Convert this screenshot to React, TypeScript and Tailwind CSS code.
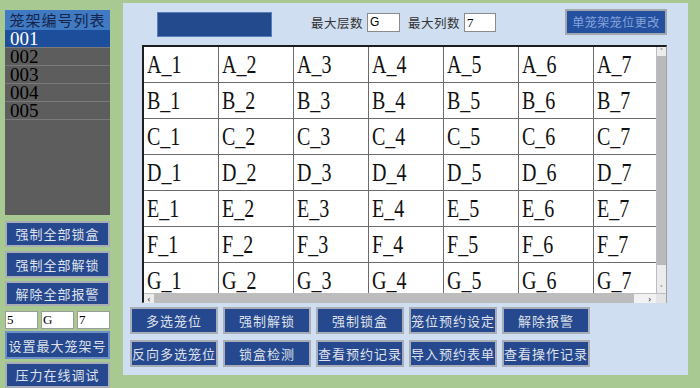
import React from 'react';

const rows = ['A', 'B', 'C', 'D', 'E', 'F', 'G'];
const cols = [1, 2, 3, 4, 5, 6, 7];
const cages = ['001', '002', '003', '004', '005'];

const bottomRow1 = ['多选笼位', '强制解锁', '强制锁盒', '笼位预约设定', '解除报警'];
const bottomRow2 = ['反向多选笼位', '锁盒检测', '查看预约记录', '导入预约表单', '查看操作记录'];

const cjk = "font-['Noto_Sans_CJK_SC',sans-serif]";

const BlueButton = ({ label, className = '' }: { label: string; className?: string }) => (
    <div
        className={`flex items-center justify-center bg-[#26488f] border-2 border-[#a9adb5] text-[#dfe2ea] text-[13px] tracking-[1px] ${cjk} ${className}`}
    >
        {label}
    </div>
);

export default function App() {
    return (
        <div className="w-[700px] h-[388px] bg-[#a8ca92] flex overflow-hidden">
            {/* Left side: cage list + global actions */}
            <div className="w-[123px] shrink-0 flex flex-col pl-[5px] pr-[13px] pt-[10px]">
                <div className={`h-[20px] bg-[#3f7ac3] text-[#16244a] text-[15px] tracking-[1px] leading-[20px] flex items-center justify-center ${cjk}`}>
                    笼架编号列表
                </div>
                <div className="h-[187px] bg-[#5d5d5d] flex flex-col font-['Liberation_Serif',serif] text-[19px]">
                    {cages.map((c, i) => (
                        <div
                            key={c}
                            className={`h-[18px] leading-[17px] pl-[5px] border-b border-[#7a7a7a] ${i === 0 ? 'bg-[#1d4e9b] text-white' : 'text-black'}`}
                        >
                            {c}
                        </div>
                    ))}
                </div>
                <BlueButton label="强制全部锁盒" className="mt-[6px] h-[26px]" />
                <BlueButton label="强制全部解锁" className="mt-[4px] h-[27px]" />
                <BlueButton label="解除全部报警" className="mt-[3px] h-[26px]" />
                <div className="mt-[5px] h-[18px] flex gap-[3px] font-['Liberation_Serif',serif] text-[13px]">
                    {['5', 'G', '7'].map((v, i) => (
                        <div key={i} className="flex-1 bg-white border border-[#9a9a9a] pl-[1px] leading-[16px] text-black">
                            {v}
                        </div>
                    ))}
                </div>
                <BlueButton label="设置最大笼架号" className="mt-[2px] h-[28px] !border-[#6f8fc9]" />
                <BlueButton label="压力在线调试" className="mt-[3px] h-[26px]" />
            </div>

            {/* Main panel */}
            <div className="mt-[3px] w-[565px] h-[372px] bg-[#cfdef0] flex flex-col">
                {/* Top bar */}
                <div className="h-[42px] flex items-start">
                    <div className="ml-[34px] mt-[9px] w-[115px] h-[25px] bg-[#244a8e] border border-[#5a7cb8]" />
                    <div className={`ml-[39px] mt-[11px] text-[12.5px] tracking-[0.5px] text-[#333] ${cjk}`}>最大层数</div>
                    <div className="ml-[4px] mt-[10px] w-[33px] h-[19px] bg-white border border-[#8a8a8a] text-[12px] pl-[2px] leading-[17px] font-['Liberation_Sans',sans-serif]">
                        G
                    </div>
                    <div className={`ml-[8px] mt-[11px] text-[12.5px] tracking-[0.5px] text-[#333] ${cjk}`}>最大列数</div>
                    <div className="ml-[4px] mt-[10px] w-[32px] h-[19px] bg-white border border-[#8a8a8a] text-[13px] pl-[2px] leading-[17px] font-['Liberation_Serif',serif]">
                        7
                    </div>
                    <div
                        className={`ml-[69px] mt-[6px] w-[102px] h-[26px] bg-[#2450a0] border-2 border-[#a3a7ae] flex items-center justify-center text-[12px] tracking-[0.5px] text-[#86a3da] ${cjk}`}
                    >
                        单笼架笼位更改
                    </div>
                </div>

                {/* Grid table */}
                <div className="ml-[19px] w-[525px] h-[258px] bg-white border-l-2 border-t-2 border-[#1e1e1e] border-r border-b border-r-[#a0a0a0] border-b-[#a0a0a0] flex flex-col">
                    <div className="flex h-[246px]">
                        <div className="w-[512px] overflow-hidden">
                            {rows.map((r) => (
                                <div key={r} className="flex w-max">
                                    {cols.map((c) => (
                                        <div
                                            key={c}
                                            className="w-[75px] h-[36px] shrink-0 border-r border-b border-[#6b6b6b] pl-[3px] pt-[7px] font-['Liberation_Serif',serif] text-[25px] leading-[22px] text-[#111]"
                                        >
                                            <span className="inline-block origin-left scale-x-[0.8] whitespace-nowrap">
                                                {r}_{c}
                                            </span>
                                        </div>
                                    ))}
                                </div>
                            ))}
                        </div>
                        {/* vertical scrollbar */}
                        <div className="w-[10px] flex flex-col bg-[#ececec] border-l border-[#bdbdbd]">
                            <div className="h-[9px] flex items-center justify-center text-[8px] leading-none text-[#333]">˄</div>
                            <div className="h-[209px] bg-[#b9b9b9]" />
                            <div className="flex-1" />
                            <div className="h-[9px] flex items-center justify-center text-[8px] leading-none text-[#333]">˅</div>
                        </div>
                    </div>
                    {/* horizontal scrollbar */}
                    <div className="flex-1 flex border-t border-[#bdbdbd]">
                        <div className="w-[10px] bg-[#ececec] flex items-center justify-center text-[9px] leading-none text-[#333]">‹</div>
                        <div className="w-[480px] bg-[#bcbcbc]" />
                        <div className="flex-1 bg-[#f2f2f2] flex items-center justify-end pr-[5px] text-[9px] leading-none text-[#333]">›</div>
                        <div className="w-[10px] bg-[#e4e4e4]" />
                    </div>
                </div>

                {/* Bottom action buttons */}
                <div className="ml-[7px] mt-[4px] grid grid-cols-[repeat(5,88px)] gap-x-[5px] gap-y-[6px]">
                    {bottomRow1.map((b) => (
                        <BlueButton key={b} label={b} className="h-[27px]" />
                    ))}
                    {bottomRow2.map((b) => (
                        <BlueButton key={b} label={b} className="h-[27px]" />
                    ))}
                </div>
            </div>
        </div>
    );
}
